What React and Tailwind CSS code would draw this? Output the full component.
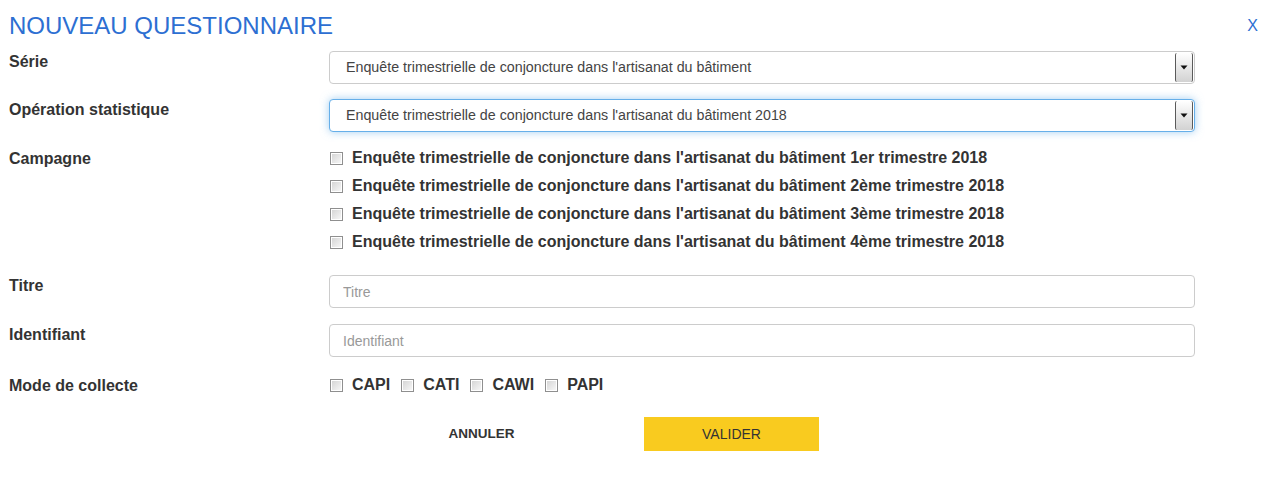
import React from "react";

const font = { fontFamily: '"Liberation Sans", Arial, sans-serif' };

function Box() {
  return (
    <span className="inline-block w-[13px] h-[13px] shrink-0 border border-[#8f8f8f] bg-white p-[1px]">
      <span className="block w-full h-full bg-gradient-to-br from-[#d6d6d6] to-[#f6f6f6]" />
    </span>
  );
}

function Select({ text, focused }) {
  return (
    <div
      className={
        "relative flex items-center h-[33px] w-[866px] rounded-[4px] border bg-white " +
        (focused
          ? "border-[#66afe9] shadow-[0_0_8px_rgba(102,175,233,0.6)]"
          : "border-[#cccccc]")
      }
    >
      <span className="pl-[16px] text-[14.25px] text-[#444]">{text}</span>
      <span className="absolute right-[1px] top-[1px] bottom-[1px] w-[18px] border-x border-[#5a5a5a] rounded-[2px] bg-gradient-to-b from-white to-[#d2d2d2] flex items-center justify-center">
        <svg width="8" height="5" viewBox="0 0 8 5">
          <path d="M0.5 0.5 H7.5 L4 4.5 Z" fill="#111" />
        </svg>
      </span>
    </div>
  );
}

function Row({ label, children, className = "" }) {
  return (
    <div className={"flex " + className}>
      <div className="w-[320px] shrink-0 pt-[1px] text-[16px] font-bold leading-[20px] text-[#333]">
        {label}
      </div>
      <div>{children}</div>
    </div>
  );
}

export default function App() {
  const campagnes = ["1er", "2ème", "3ème", "4ème"];
  return (
    <div className="w-[1268px] h-[485px] bg-white pl-[9px] relative" style={font}>
      <div className="flex items-start justify-between pt-[13px] pr-[10px]">
        <h1 className="text-[24px] leading-[26px] text-[#2d6fd2] font-normal">
          NOUVEAU QUESTIONNAIRE
        </h1>
        <span className="text-[16px] leading-[20px] text-[#2d6fd2] mt-[3px]">X</span>
      </div>

      <Row label="Série" className="mt-[12px]">
        <Select text="Enquête trimestrielle de conjoncture dans l'artisanat du bâtiment" />
      </Row>

      <Row label="Opération statistique" className="mt-[15px]">
        <Select focused text="Enquête trimestrielle de conjoncture dans l'artisanat du bâtiment 2018" />
      </Row>

      <Row label="Campagne" className="mt-[16px]">
        <div className="flex flex-col">
          {campagnes.map((c, i) => (
            <label key={c} className={"flex items-center h-[20px] " + (i === 0 ? "" : "mt-[8px]")}>
              <span className="ml-[1px] flex"><Box /></span>
              <span className="ml-[9px] text-[16px] font-bold text-[#333]">
                Enquête trimestrielle de conjoncture dans l'artisanat du bâtiment {c} trimestre 2018
              </span>
            </label>
          ))}
        </div>
      </Row>

      <Row label="Titre" className="mt-[23px]">
        <input
          placeholder="Titre"
          className="h-[33px] w-[866px] rounded-[4px] border border-[#cccccc] px-[13px] text-[14px] text-[#555] placeholder:text-[#999] outline-none"
        />
      </Row>

      <Row label="Identifiant" className="mt-[16px]">
        <input
          placeholder="Identifiant"
          className="h-[33px] w-[866px] rounded-[4px] border border-[#cccccc] px-[13px] text-[14px] text-[#555] placeholder:text-[#999] outline-none"
        />
      </Row>

      <Row label="Mode de collecte" className="mt-[18px]">
        <div className="flex items-center h-[20px]">
          {["CAPI", "CATI", "CAWI", "PAPI"].map((m) => (
            <span key={m} className="flex items-center mr-[10px]">
              <span className="ml-[1px] flex"><Box /></span>
              <span className="ml-[9px] text-[16px] font-bold text-[#333]">{m}</span>
            </span>
          ))}
        </div>
      </Row>

      <div className="flex mt-[21px] ml-[385px]">
        <button className="w-[175px] h-[34px] text-[13.5px] font-bold text-[#333]">ANNULER</button>
        <button className="ml-[75px] w-[175px] h-[34px] bg-[#f9cb1f] text-[14px] text-[#333]">VALIDER</button>
      </div>
    </div>
  );
}
